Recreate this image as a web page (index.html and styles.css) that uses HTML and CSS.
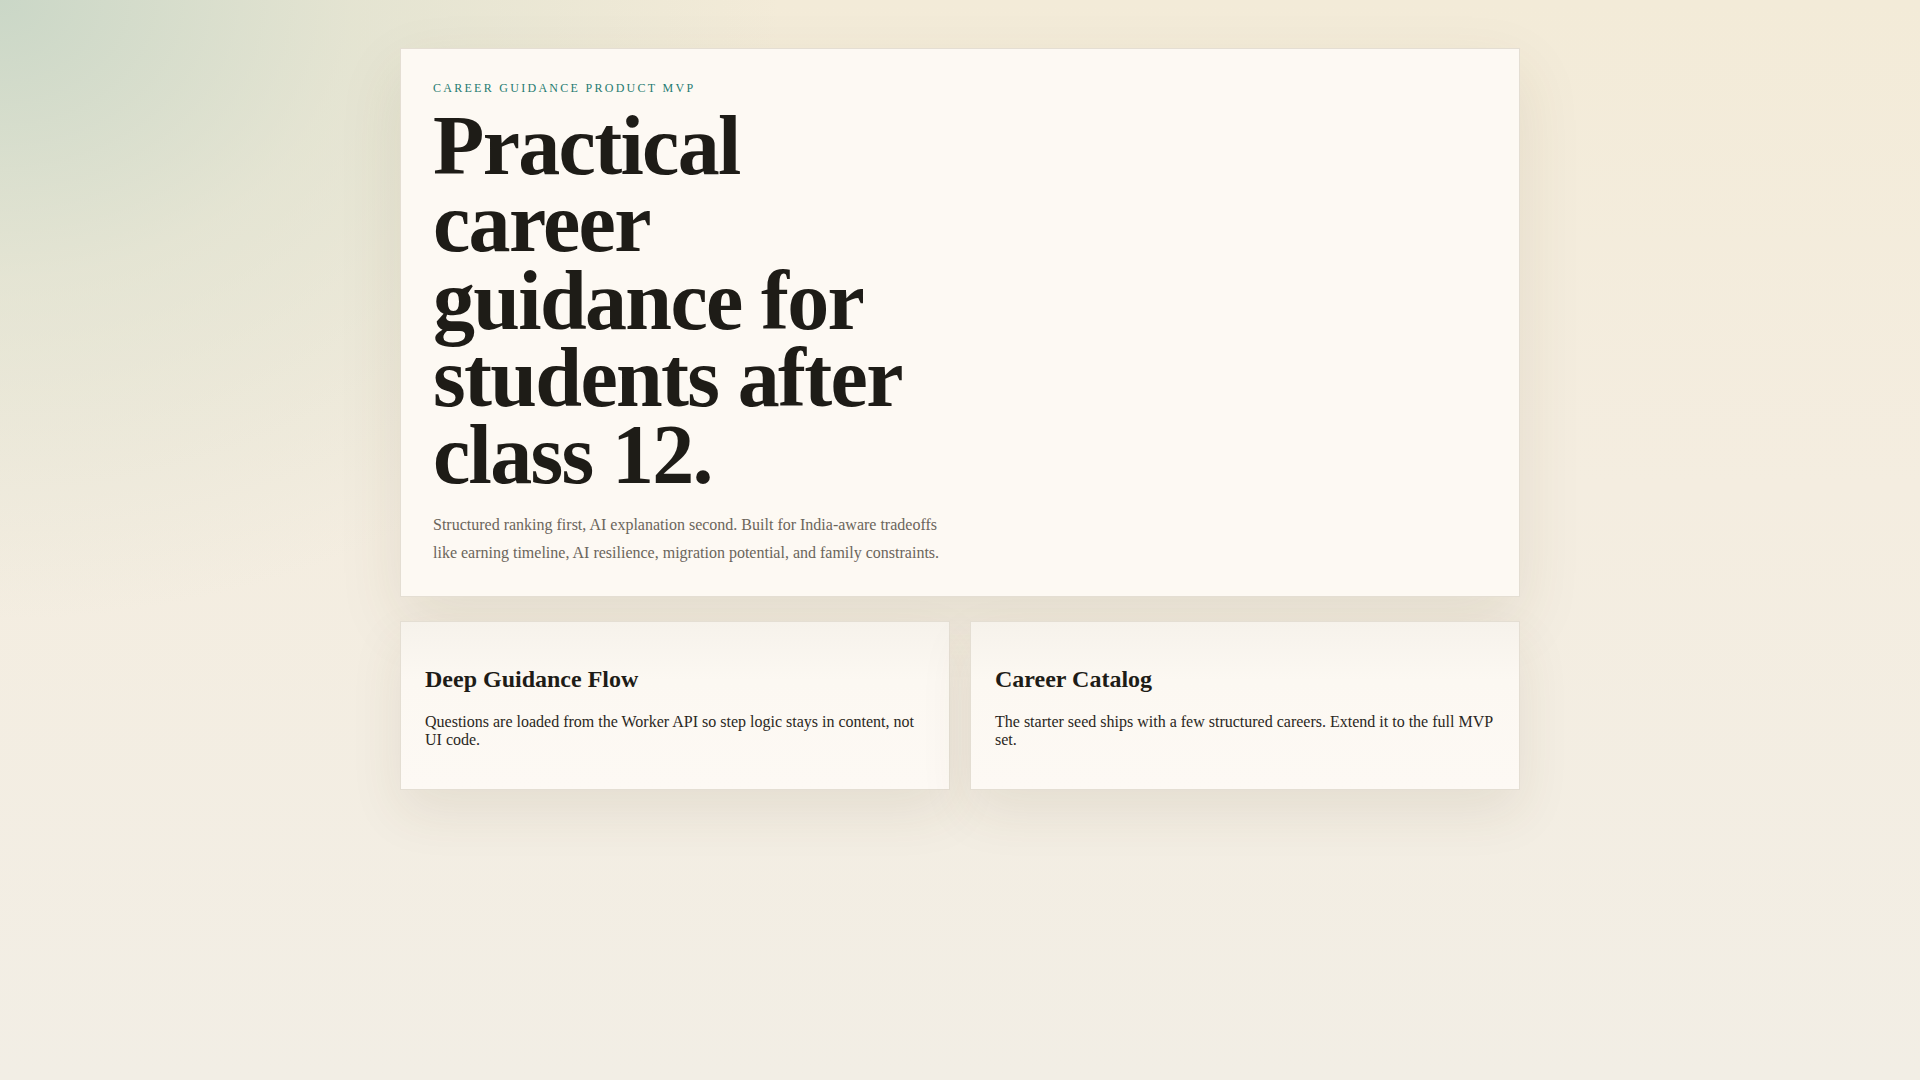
FILE: index.html
```html
<!DOCTYPE html>
<html lang="en">
<head>
    <meta charset="UTF-8">
    <meta name="viewport" content="width=device-width, initial-scale=1.0">
    <title>Career Guidance MVP</title>
    <link rel="stylesheet" href="styles.css">
</head>
<body>
    <main class="shell">
        <section class="hero">
            <p class="eyebrow">Career guidance product MVP</p>
            <h1 class="headline">Practical career guidance for students after class 12.</h1>
            <p class="lede">Structured ranking first, AI explanation second. Built for India-aware tradeoffs like earning timeline, AI resilience, migration potential, and family constraints.</p>
        </section>

        <section class="cards">
            <article class="card">
                <h2>Deep Guidance Flow</h2>
                <p>Questions are loaded from the Worker API so step logic stays in content, not UI code.</p>
            </article>
            <article class="card">
                <h2>Career Catalog</h2>
                <p>The starter seed ships with a few structured careers. Extend it to the full MVP set.</p>
            </article>
        </section>
    </main>
</body>
</html>
```

FILE: styles.css
```css
body {
    margin: 0;
    min-height: 100vh;
    font-family: 'Liberation Serif', 'Times New Roman', serif;
    color: #1e1c17;
    background:
        radial-gradient(ellipse 780px 620px at 0 0, rgba(200, 214, 198, 0.95) 0, rgba(216, 222, 204, 0.55) 45%, rgba(240, 234, 216, 0) 100%),
        linear-gradient(180deg, #f3ebd8 0%, #f4ede0 45%, #f2eee5 100%);
}
.shell {
    max-width: 1120px;
    margin: 0 auto;
    padding: 48px 0;
}
.hero {
    background-color: #fdf9f3;
    border: 1px solid #e4ded3;
    padding: 32px 32px 30px;
    box-shadow: 0 24px 60px rgba(90, 70, 30, 0.1);
}
.eyebrow {
    margin: 0;
    font-size: 12px;
    letter-spacing: 0.19em;
    text-transform: uppercase;
    color: #1f7b71;
}
.headline {
    margin: 11px 0 18px;
    max-width: 520px;
    font-size: 84px;
    line-height: 0.92;
    letter-spacing: -0.02em;
    color: #1e1c17;
}
.lede {
    margin: 0;
    max-width: 520px;
    font-size: 16px;
    line-height: 1.7;
    color: #6b655b;
}
.cards {
    display: grid;
    grid-template-columns: 1fr 1fr;
    gap: 20px;
    margin-top: 24px;
}
.card {
    padding: 24px;
    border: 1px solid #e4ded3;
    background: linear-gradient(180deg, #f6f2eb 0%, #fcf8f2 35%, #fdf9f4 100%);
    box-shadow: 0 22px 50px rgba(90, 70, 30, 0.09);
}
.card h2 {
    color: #1e1c17;
}
.card p {
    color: #2a2722;
}
```
